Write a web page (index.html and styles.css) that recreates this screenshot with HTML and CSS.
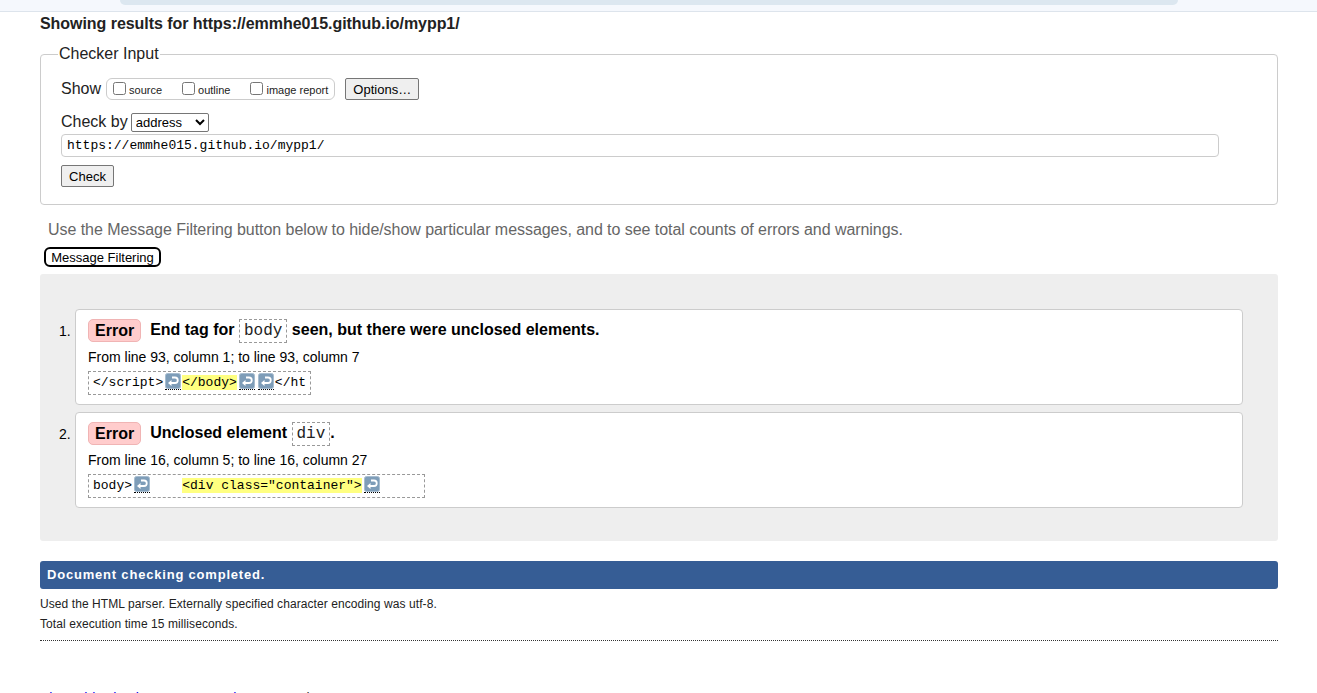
FILE: index.html
```html
<!DOCTYPE html>
<html lang="en">
<head>
<meta charset="utf-8">
<title>Showing results for https://emmhe015.github.io/mypp1/ - Nu Html Checker</title>
<link rel="stylesheet" href="styles.css">
</head>
<body>
<header class="topbar"><div class="topbar-pill"></div></header>
<main class="page">
  <h2 class="results-title">Showing results for https://emmhe015.github.io/mypp1/</h2>
  <form class="checker-form">
    <fieldset class="checker-input">
      <legend>Checker Input</legend>
      <div class="row show-row">
        <span class="label-big">Show</span>
        <span class="show-group">
          <label class="opt"><input type="checkbox">source</label>
          <label class="opt"><input type="checkbox">outline</label>
          <label class="opt"><input type="checkbox">image report</label>
        </span>
        <button type="button" class="btn options-btn">Options…</button>
      </div>
      <div class="row checkby-row">
        <span class="label-big">Check by</span>
        <select class="checkby-select"><option>address</option></select>
      </div>
      <input class="url-input" type="text" value="https://emmhe015.github.io/mypp1/">
      <div class="row"><button type="button" class="btn check-btn">Check</button></div>
    </fieldset>
  </form>
  <p class="filter-hint">Use the Message Filtering button below to hide/show particular messages, and to see total counts of errors and warnings.</p>
  <button type="button" class="filter-btn">Message Filtering</button>
  <div class="results-panel">
    <ol class="messages">
      <li class="msg-item">
        <div class="msg-card">
          <p class="msg-head"><span class="badge">Error</span><span class="msg-text">End tag for <code class="tag">body</code> seen, but there were unclosed elements.</span></p>
          <p class="location">From line 93, column 1; to line 93, column 7</p>
          <p class="extract"><code>&lt;/script&gt;<abbr class="lf" title="U+000A"><svg width="16" height="16" viewBox="0 0 16 16"><rect x="0.5" y="0.5" width="15" height="15" rx="2" fill="#7e9db8" stroke="#a7bdd0"/><path d="M7 4.5h3a2.75 2.75 0 0 1 0 5.5H5.5" fill="none" stroke="#fff" stroke-width="1.8"/><path d="M6.5 7 3 10l3.5 3z" fill="#fff"/></svg></abbr><b class="hl">&lt;/body&gt;</b><abbr class="lf" title="U+000A"><svg width="16" height="16" viewBox="0 0 16 16"><rect x="0.5" y="0.5" width="15" height="15" rx="2" fill="#7e9db8" stroke="#a7bdd0"/><path d="M7 4.5h3a2.75 2.75 0 0 1 0 5.5H5.5" fill="none" stroke="#fff" stroke-width="1.8"/><path d="M6.5 7 3 10l3.5 3z" fill="#fff"/></svg></abbr><abbr class="lf" title="U+000A"><svg width="16" height="16" viewBox="0 0 16 16"><rect x="0.5" y="0.5" width="15" height="15" rx="2" fill="#7e9db8" stroke="#a7bdd0"/><path d="M7 4.5h3a2.75 2.75 0 0 1 0 5.5H5.5" fill="none" stroke="#fff" stroke-width="1.8"/><path d="M6.5 7 3 10l3.5 3z" fill="#fff"/></svg></abbr>&lt;/ht</code></p>
        </div>
      </li>
      <li class="msg-item">
        <div class="msg-card">
          <p class="msg-head"><span class="badge">Error</span><span class="msg-text">Unclosed element <code class="tag">div</code>.</span></p>
          <p class="location">From line 16, column 5; to line 16, column 27</p>
          <p class="extract"><code>body&gt;<abbr class="lf" title="U+000A"><svg width="16" height="16" viewBox="0 0 16 16"><rect x="0.5" y="0.5" width="15" height="15" rx="2" fill="#7e9db8" stroke="#a7bdd0"/><path d="M7 4.5h3a2.75 2.75 0 0 1 0 5.5H5.5" fill="none" stroke="#fff" stroke-width="1.8"/><path d="M6.5 7 3 10l3.5 3z" fill="#fff"/></svg></abbr>    <b class="hl">&lt;div class="container"&gt;</b><abbr class="lf" title="U+000A"><svg width="16" height="16" viewBox="0 0 16 16"><rect x="0.5" y="0.5" width="15" height="15" rx="2" fill="#7e9db8" stroke="#a7bdd0"/><path d="M7 4.5h3a2.75 2.75 0 0 1 0 5.5H5.5" fill="none" stroke="#fff" stroke-width="1.8"/><path d="M6.5 7 3 10l3.5 3z" fill="#fff"/></svg></abbr>     </code></p>
        </div>
      </li>
    </ol>
  </div>
  <p class="done-bar">Document checking completed.</p>
  <div class="details">
    <p>Used the HTML parser. Externally specified character encoding was utf-8.</p>
    <p>Total execution time 15 milliseconds.</p>
  </div>
  <footer class="footer">
    <a href="#">About this checker</a> • <a href="#">Report an issue</a> • <span class="version">Version: 24.7.30</span>
  </footer>
</main>
</body>
</html>
```
FILE: styles.css
```css
html, body {
  margin: 0;
  padding: 0;
  background: #fff;
  color: #222;
  font-family: "Liberation Sans", Arial, sans-serif;
}

.topbar {
  height: 11px;
  background: #f5f8fd;
  border-bottom: 1px solid #dde4ec;
}

.topbar-pill {
  margin-left: 120px;
  width: 1058px;
  height: 5px;
  background: #dce7f0;
  border-radius: 0 0 14px 14px;
}

.page {
  margin: 0 39px 0 40px;
}

.results-title {
  margin: 0;
  padding-top: 2px;
  font-size: 16px;
  line-height: 20px;
  font-weight: bold;
  color: #222;
  letter-spacing: -0.05px;
}

.checker-form {
  margin: 0;
  padding-top: 11px;
}

.checker-input {
  margin: 0;
  border: 1px solid #ccc;
  border-radius: 4px;
  padding: 10px 20px 17px 20px;
}

.checker-input legend {
  font-size: 16px;
  padding: 0 1px;
  margin-left: -3px;
  color: #222;
}

.row {
  display: flex;
  align-items: center;
}

.show-row {
  margin-top: 5px;
  height: 22px;
}

.label-big {
  font-size: 16px;
  color: #222;
}

.show-group {
  margin-left: 5px;
  display: inline-flex;
  align-items: flex-end;
  box-sizing: border-box;
  border: 1px solid #ccc;
  border-radius: 6px;
  height: 22px;
  padding: 0 6px 2px 0;
}

.opt {
  font-size: 11px;
  line-height: 13px;
  display: inline-flex;
  align-items: flex-end;
  margin-right: 14px;
  color: #222;
}

.opt:last-child {
  margin-right: 0;
}

.opt input {
  margin: 0 3px 2px 6px;
  width: 13px;
  height: 13px;
}

.btn {
  font-family: "Liberation Sans", Arial, sans-serif;
  font-size: 13px;
  color: #000;
  background: #efefef;
  border: 1px solid #767676;
  border-radius: 2px;
  padding: 0 6px;
  height: 22px;
}

.options-btn {
  margin-left: 10px;
  width: 74px;
  padding: 0;
}

.checkby-row {
  margin-top: 12px;
  height: 20px;
}

.checkby-select {
  margin-left: 3px;
  width: 78px;
  height: 19px;
  font-family: "Liberation Sans", Arial, sans-serif;
  font-size: 13px;
  border: 1px solid #767676;
  border-radius: 2px;
  background: #fff;
  padding: 0;
}

.url-input {
  display: block;
  margin-top: 2px;
  box-sizing: border-box;
  width: 1158px;
  height: 23px;
  border: 1px solid #ccc;
  border-radius: 4px;
  padding: 0 5px;
  font-family: "Liberation Mono", "Courier New", monospace;
  font-size: 13px;
  color: #000;
}

.check-btn {
  margin-top: 8px;
  width: 53px;
  padding: 0;
}

.filter-hint {
  margin: 16px 0 0 8px;
  font-size: 16px;
  line-height: 18px;
  color: #666;
  letter-spacing: -0.05px;
}

.filter-btn {
  display: block;
  margin: 8px 0 0 4px;
  box-sizing: border-box;
  width: 117px;
  height: 20px;
  border: 2px solid #000;
  border-radius: 6px;
  background: #fff;
  font-family: "Liberation Sans", Arial, sans-serif;
  font-size: 13px;
  color: #000;
  padding: 0;
}

.results-panel {
  margin-top: 7px;
  background: #eee;
  border-radius: 3px;
  padding: 35px 35px 33px 0;
}

.messages {
  margin: 0;
  padding: 0 0 0 35px;
  list-style: none;
  counter-reset: msg;
}

.msg-item {
  counter-increment: msg;
  display: flex;
  margin-bottom: 7px;
}

.msg-item:last-child {
  margin-bottom: 0;
}

.msg-item::before {
  content: counter(msg) ".";
  font-size: 14px;
  line-height: 16px;
  width: 16px;
  margin-left: -16px;
  padding-top: 14px;
  color: #000;
}

.msg-card {
  flex: 1;
  background: #fff;
  border: 1px solid #ccc;
  border-radius: 4px;
  padding: 8px 12px 9px 12px;
}

.msg-head {
  margin: 0;
  display: flex;
  align-items: center;
  height: 24px;
}

.badge {
  display: inline-block;
  box-sizing: border-box;
  height: 23px;
  line-height: 21px;
  padding: 0 6px;
  background: #fcc;
  border: 1px solid #f0b4b4;
  border-radius: 5px;
  font-weight: bold;
  font-size: 16px;
  color: #000;
}

.msg-text {
  margin-left: 9px;
  font-weight: bold;
  font-size: 16px;
  color: #000;
}

.tag {
  font-family: "Liberation Mono", "Courier New", monospace;
  font-weight: normal;
  font-size: 16px;
  border: 1px dashed #999;
  padding: 2px 4px;
  color: #222;
}

.location {
  margin: 4px 0 0 0;
  font-size: 14px;
  line-height: 22px;
  color: #000;
}

.extract {
  margin: 3px 0 0 0;
  display: flex;
}

.extract code {
  display: block;
  box-sizing: border-box;
  height: 24px;
  border: 1px dashed #999;
  padding: 0 4px;
  font-family: "Liberation Mono", "Courier New", monospace;
  font-size: 13px;
  line-height: 22px;
  white-space: pre;
  color: #000;
}

.hl {
  background: #ffff80;
  font-weight: normal;
}

.lf {
  display: inline-block;
  margin: 0 1px 0 2px;
  border-bottom: 1px dotted #000;
  text-decoration: none;
  line-height: 0;
  vertical-align: -4px;
}

.lf svg {
  display: block;
}

.done-bar {
  margin: 20px 0 0 0;
  background: #365d95;
  color: #fff;
  border-radius: 3px;
  height: 28px;
  line-height: 28px;
  padding: 0 7px;
  font-weight: bold;
  font-size: 13px;
  letter-spacing: 0.8px;
}

.details {
  border-bottom: 1px dotted #333;
  padding-bottom: 6px;
}

.details p {
  margin: 0;
  font-size: 12px;
  line-height: 20px;
  color: #222;
  letter-spacing: 0.08px;
}

.details p:first-child {
  margin-top: 5px;
}

.footer {
  margin-top: 49px;
  font-size: 14px;
  color: #333;
}

.footer a {
  color: #00e;
  text-decoration: none;
}
```
